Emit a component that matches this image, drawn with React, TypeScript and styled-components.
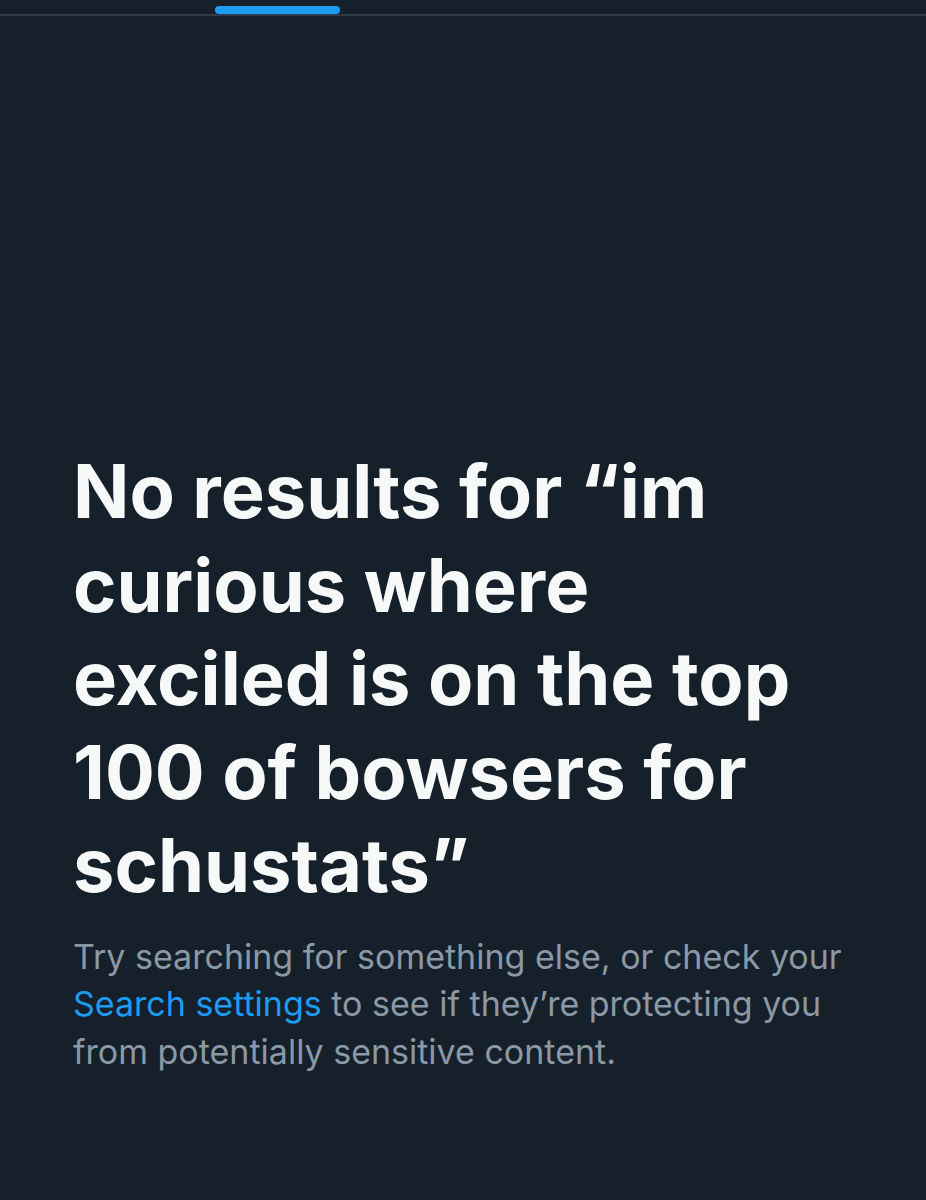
import React from 'react';
import styled, { createGlobalStyle } from 'styled-components';

const GlobalStyle = createGlobalStyle`
  html, body {
    margin: 0;
    padding: 0;
    background-color: #15202b;
  }
  body {
    font-family: Inter, "Liberation Sans", sans-serif;
    -webkit-font-smoothing: antialiased;
  }
`;

const Page = styled.div`
  width: 926px;
  min-height: 1200px;
  background-color: #15202b;
  display: flex;
  flex-direction: column;
`;

const TabBar = styled.div`
  height: 14px;
  border-bottom: 2px solid #2f3b47;
  display: flex;
  align-items: flex-end;
  padding-left: 215px;
`;

const TabIndicator = styled.div`
  width: 125px;
  height: 8px;
  border-radius: 999px;
  background-color: #1d9bf0;
`;

const EmptyState = styled.div`
  padding: 429px 73px 0 73px;
  display: flex;
  flex-direction: column;
  gap: 20px;
`;

const Title = styled.h1`
  margin: 0;
  color: #f7f9f9;
  font-size: 74px;
  font-weight: 700;
  line-height: 93.5px;
  letter-spacing: 0;
  max-width: 740px;
`;

const Hint = styled.p`
  margin: 0;
  color: #8b98a5;
  font-size: 34px;
  font-weight: 400;
  line-height: 47.5px;
  max-width: 790px;
`;

const Link = styled.a`
  color: #1d9bf0;
  text-decoration: none;
`;

export default function App() {
  return (
    <Page>
      <GlobalStyle />
      <TabBar>
        <TabIndicator />
      </TabBar>
      <EmptyState>
        <Title>No results for “im curious where exciled is on the top 100 of bowsers for schustats”</Title>
        <Hint>
          Try searching for something else, or check your <Link href="#">Search settings</Link> to see if
          they’re protecting you from potentially sensitive content.
        </Hint>
      </EmptyState>
    </Page>
  );
}
